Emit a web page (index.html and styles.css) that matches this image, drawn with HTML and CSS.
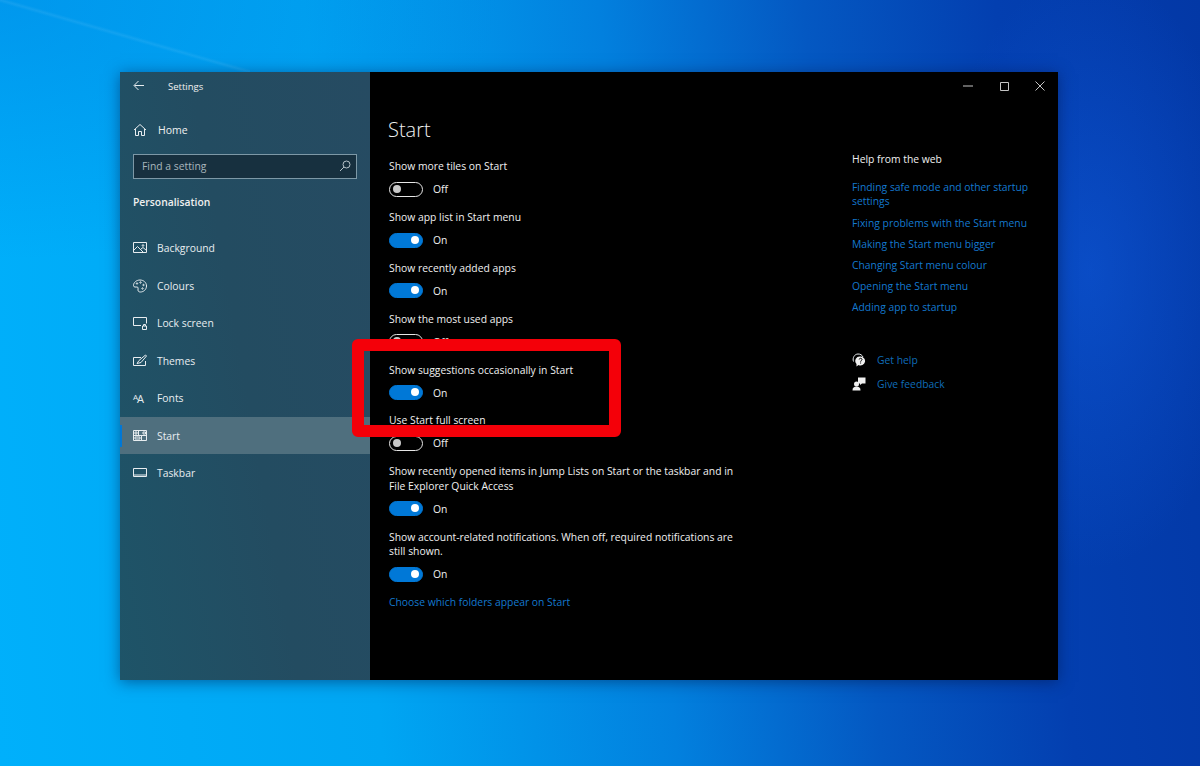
FILE: index.html
```html
<!DOCTYPE html>
<html lang="en">
<head>
    <meta charset="UTF-8">
    <title>Settings - Start</title>
    <link rel="stylesheet" href="styles.css">
</head>
<body>
    <div class="window">
        <aside class="sidebar">
            <div class="app-bar">
                <svg class="back" width="12" height="12" viewBox="0 0 12 12"><path d="M11 5.500H1.500M5.500 1 1 5.500 5.500 10"/></svg>
                <span>Settings</span>
            </div>
            <div class="home">
                <svg class="icon" viewBox="0 0 14 14"><path d="M1 7 7 1.500 13 7M2.500 6v6.500h3V8.500h3v4h3V6"/></svg>
                <span>Home</span>
            </div>
            <div class="search">
                <span>Find a setting</span>
                <svg class="search-icon" width="12" height="12" viewBox="0 0 12 12"><circle cx="7.500" cy="4.500" r="3.500"/><path d="M5 7 1 11"/></svg>
            </div>
            <h2 class="section">Personalisation</h2>
            <nav class="nav">
                <div class="nav-item">
                    <svg class="icon" viewBox="0 0 14 14"><path d="M.5 1.500h13v10H.5zM1 9l3.500-3.500 6 6M8 8l2-1.500 3.500 3"/><circle cx="10" cy="4.500" r=".8"/></svg>
                    <span>Background</span>
                </div>
                <div class="nav-item">
                    <svg class="icon" viewBox="0 0 14 14"><path d="M7 1C3.500 1 .5 3.500.5 6.500c0 2 2.500 1.500 3.500 1.500 1.500 0 1 1.500 1 3 0 1.500 1 2 2.500 2 3 0 6-2.500 6-6S10.500 1 7 1z"/><circle cx="4" cy="4.500" r=".7"/><circle cx="7.500" cy="3.500" r=".7"/><circle cx="10.500" cy="6" r=".7"/><circle cx="9.500" cy="9.500" r=".7"/></svg>
                    <span>Colours</span>
                </div>
                <div class="nav-item">
                    <svg class="icon" viewBox="0 0 14 14"><path d="M8 9.500H.5v-8h13v6M9.500 10h4v3.500h-4zM10.500 10V8.500h2V10"/></svg>
                    <span>Lock screen</span>
                </div>
                <div class="nav-item">
                    <svg class="icon" viewBox="0 0 14 14"><path d="M8 3.500H.5v8h12V7M4 9.500l2-3L12.500 1l1 1L8 8.500z"/></svg>
                    <span>Themes</span>
                </div>
                <div class="nav-item">
                    <span class="font-glyph"><small>A</small>A</span>
                    <span>Fonts</span>
                </div>
                <div class="nav-item active">
                    <svg class="icon" viewBox="0 0 14 14"><path d="M.5 1.500h13v10H.5zM.5 6.500h13M5.500 1.500v5M8.500 6.500v5M2 3h2v2H2zM10 3h2.500v2H10zM2 8h5v2H2z"/></svg>
                    <span>Start</span>
                </div>
                <div class="nav-item">
                    <svg class="icon" viewBox="0 0 14 14"><path d="M.5 2.500h13v8H.5zM.5 9h13"/></svg>
                    <span>Taskbar</span>
                </div>
            </nav>
        </aside>
        <main class="main">
            <div class="controls">
                <svg width="10" height="10" viewBox="0 0 10 10"><path d="M0 5h10"/></svg>
                <svg width="10" height="10" viewBox="0 0 10 10"><path d="M1.500 1.500h8v8h-8z"/></svg>
                <svg width="10" height="10" viewBox="0 0 10 10"><path d="m.5.500 9 9M9.500.500l-9 9"/></svg>
            </div>
            <div class="content">
                <section class="settings">
                    <h1 class="title">Start</h1>
                    <div class="setting">
                        <p>Show more tiles on Start</p>
                        <div class="switch-row"><span class="switch"></span>Off</div>
                    </div>
                    <div class="setting">
                        <p>Show app list in Start menu</p>
                        <div class="switch-row"><span class="switch on"></span>On</div>
                    </div>
                    <div class="setting">
                        <p>Show recently added apps</p>
                        <div class="switch-row"><span class="switch on"></span>On</div>
                    </div>
                    <div class="setting">
                        <p>Show the most used apps</p>
                        <div class="switch-row"><span class="switch"></span>Off</div>
                    </div>
                    <div class="setting">
                        <p>Show suggestions occasionally in Start</p>
                        <div class="switch-row"><span class="switch on"></span>On</div>
                    </div>
                    <div class="setting">
                        <p>Use Start full screen</p>
                        <div class="switch-row"><span class="switch"></span>Off</div>
                    </div>
                    <div class="setting">
                        <p>Show recently opened items in Jump Lists on Start or the taskbar and in File Explorer Quick Access</p>
                        <div class="switch-row"><span class="switch on"></span>On</div>
                    </div>
                    <div class="setting">
                        <p>Show account-related notifications. When off, required notifications are still shown.</p>
                        <div class="switch-row"><span class="switch on"></span>On</div>
                    </div>
                    <a class="link folders">Choose which folders appear on Start</a>
                </section>
                <section class="help">
                    <h3>Help from the web</h3>
                    <a class="link">Finding safe mode and other startup settings</a>
                    <a class="link">Fixing problems with the Start menu</a>
                    <a class="link">Making the Start menu bigger</a>
                    <a class="link">Changing Start menu colour</a>
                    <a class="link">Opening the Start menu</a>
                    <a class="link">Adding app to startup</a>
                    <div class="help-actions">
                        <div class="help-action">
                            <svg width="14" height="14" viewBox="0 0 14 14"><path d="M1.500 8.500C.2 5 2.500 1 6 1c2.500 0 4 1 5 3"/><path class="solid" d="M8.500 3.500a4.500 4.500 0 1 1-2 8.500L4.500 13.500V11a4.500 4.500 0 0 1 4-7.500z"/><path class="mark" d="M7.200 6.500c0-1.600 2.800-1.600 2.800 0 0 1.200-1.400 1-1.400 2.200M8.600 9.500v1"/></svg>
                            <a class="link dim">Get help</a>
                        </div>
                        <div class="help-action">
                            <svg width="14" height="14" viewBox="0 0 14 14"><circle class="solid" cx="4.500" cy="7" r="2.500"/><path class="solid" d="M.5 13.500c0-3 1.500-4 4-4s4 1 4 4z"/><path class="solid" d="M6 .5h7.500v6H10L8 8V6.500H6z"/></svg>
                            <a class="link dim">Give feedback</a>
                        </div>
                    </div>
                </section>
            </div>
        </main>
    </div>
    <div class="callout"></div>
</body>
</html>
```

FILE: styles.css
```css
* {
    box-sizing: border-box;
}
html, body {
    height: 100%;
}
body {
    margin: 0;
    padding: 72px 142px 86px 120px;
    overflow: hidden;
    font-family: "Open Sans", "Noto Sans", Arial, sans-serif;
    font-size: 10.35px;
    color: #f0f0f0;
    background:
        linear-gradient(to top right, rgba(255, 255, 255, 0) 48%, rgba(255, 255, 255, 0.07) 50%, rgba(255, 255, 255, 0) 52%) 0 0 / 250px 72px no-repeat,
        radial-gradient(ellipse 160px 300px at 1090px 270px, rgba(20, 100, 235, 0.4), rgba(20, 100, 235, 0) 100%),
        radial-gradient(ellipse 500px 260px at 0 0, rgba(0, 110, 215, 0.35), rgba(0, 110, 215, 0) 100%),
        linear-gradient(84deg, #00b0fb 0%, #00a6f3 30%, #0280de 53%, #0458c2 69%, #033fb0 84%, #0338a6 100%);
}
svg {
    fill: none;
    stroke: #e8edf0;
    stroke-width: 1;
    flex: none;
}
.solid {
    fill: #f0f0f0;
    stroke: none;
}
.mark {
    stroke: #000;
}
p, h1, h2, h3 {
    margin: 0;
    font-weight: normal;
}

.window {
    display: flex;
    height: 608px;
    box-shadow: 0 2px 14px rgba(0, 20, 70, 0.5);
}

.sidebar {
    width: 250px;
    background: linear-gradient(80deg, #1e5468, #234c61 50%, #264b62);
}
.app-bar {
    display: flex;
    align-items: center;
    height: 28px;
    padding-left: 13px;
    font-size: 9.5px;
}
.back {
    margin-right: 23px;
}
.home {
    display: flex;
    align-items: center;
    gap: 11px;
    height: 20px;
    margin: 20px 0 0 13px;
    font-size: 10.5px;
}
.icon {
    width: 14px;
    height: 14px;
}
.search {
    display: flex;
    align-items: center;
    justify-content: space-between;
    width: 224px;
    height: 25px;
    margin: 14px 0 0 13px;
    padding: 0 5px 2px 8px;
    background: #17303f;
    border: 1.5px solid #7d98a6;
    color: #a9b6bd;
}
.search-icon {
    stroke: #b5c2c9;
}
.section {
    height: 16px;
    margin: 15px 0 0 13px;
    font-size: 10.35px;
    font-weight: 600;
    line-height: 16px;
}
.nav {
    margin-top: 19.4px;
}
.nav-item {
    display: flex;
    align-items: center;
    gap: 10px;
    height: 37.5px;
    padding-left: 13px;
    color: #e8edf0;
}
.nav-item.active {
    background: #4f6f7e;
    position: relative;
}
.nav-item.active::before {
    content: "";
    position: absolute;
    left: 0;
    top: 8px;
    width: 2px;
    height: 22px;
    background: #0078d7;
}
.font-glyph {
    width: 14px;
    font-size: 11px;
    line-height: 14px;
    letter-spacing: -1px;
}
.font-glyph small {
    font-size: 8px;
    vertical-align: 3px;
}

.main {
    flex: 1;
    background: #000;
}
.controls {
    display: flex;
    justify-content: flex-end;
    align-items: center;
    gap: 26px;
    height: 28px;
    padding-right: 13px;
}
.controls svg {
    stroke: #c4c4c4;
}
.content {
    display: flex;
}
.settings {
    width: 482px;
    padding-left: 19px;
}
.title {
    height: 31px;
    margin: 14px 0 14.3px -1px;
    font-size: 20px;
    font-weight: 300;
    line-height: 31px;
}
.setting {
    margin-bottom: 13.33px;
}
.setting p {
    width: 350px;
    line-height: 14.5px;
}
.switch-row {
    display: flex;
    align-items: center;
    gap: 10px;
    height: 15px;
    margin-top: 8px;
}
.switch {
    position: relative;
    width: 34px;
    height: 15px;
    border: 1.5px solid #e6e6e6;
    border-radius: 8px;
}
.switch::after {
    content: "";
    position: absolute;
    left: 3px;
    top: 2px;
    width: 8px;
    height: 8px;
    border-radius: 50%;
    background: #c8c8c8;
}
.switch.on {
    background: #0078d7;
    border-color: #0078d7;
}
.switch.on::after {
    left: auto;
    right: 3px;
    background: #fff;
}
.link {
    display: block;
    color: #1479cf;
    line-height: 14px;
}
.folders {
    margin-top: 13.7px;
}

.help {
    width: 190px;
    padding-top: 52px;
}
.help h3 {
    margin-bottom: 14px;
    font-size: 10.35px;
    line-height: 14px;
}
.help > .link {
    margin-bottom: 7px;
}
.help > .link:first-of-type {
    margin-bottom: 8px;
}
.help-actions {
    margin-top: 34px;
}
.help-action {
    display: flex;
    align-items: center;
    gap: 11px;
    height: 24px;
}
.link.dim {
    color: #0f6cb8;
}

.callout {
    position: absolute;
    left: 352px;
    top: 339px;
    width: 269px;
    height: 98px;
    border: 12px solid #f40009;
    border-radius: 6px;
}
```
